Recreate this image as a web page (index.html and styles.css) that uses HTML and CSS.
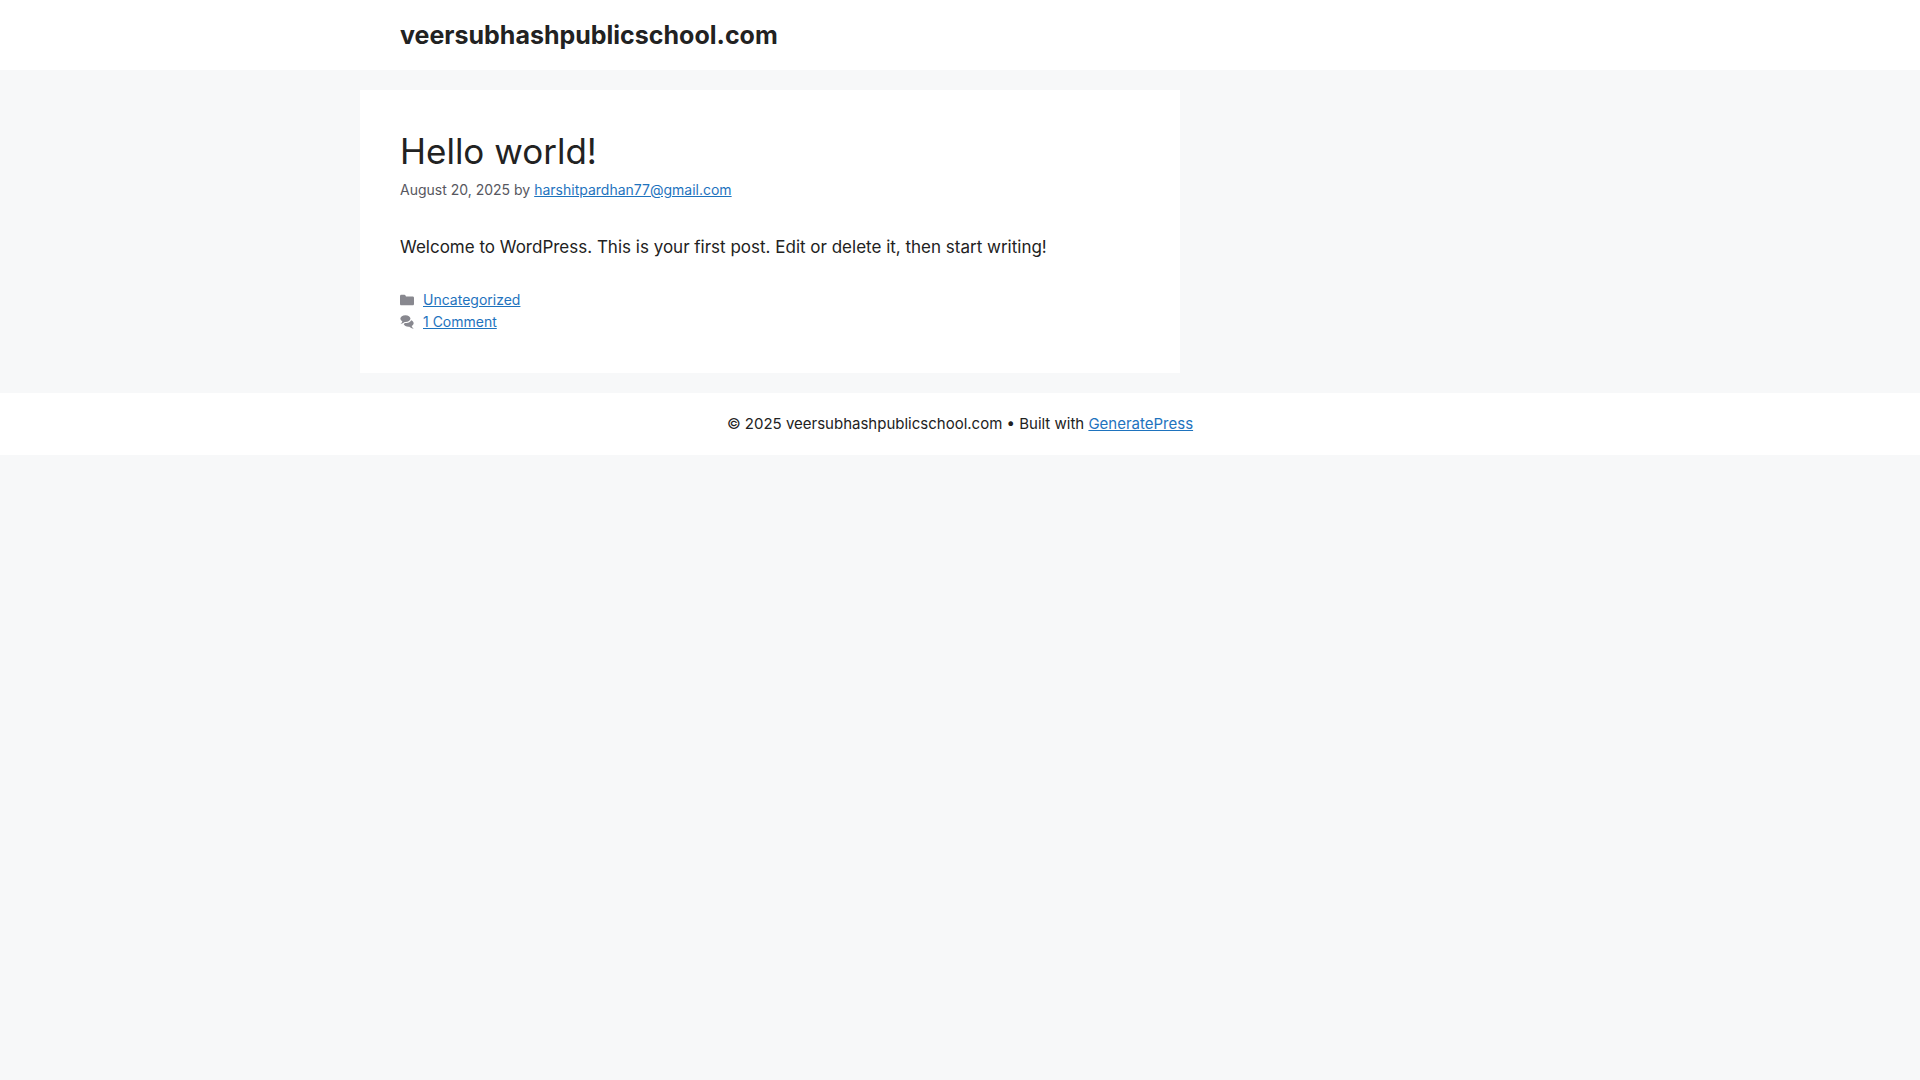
FILE: index.html
```
<!DOCTYPE html>
<html lang="en-US">
<head>
    <meta charset="UTF-8">
    <meta name="viewport" content="width=device-width, initial-scale=1.0">
    <title>veersubhashpublicschool.com</title>
    <link rel="stylesheet" href="styles.css">
</head>
<body>
    <header class="site-header">
        <div class="inside-header">
            <p class="site-title"><a href="#">veersubhashpublicschool.com</a></p>
        </div>
    </header>

    <div class="site-content">
        <main class="content-area">
            <article class="post">
                <h2 class="entry-title"><a href="#">Hello world!</a></h2>
                <div class="entry-meta">
                    <time datetime="2025-08-20">August 20, 2025</time> by <a href="#">harshitpardhan77@gmail.com</a>
                </div>
                <p class="entry-content">Welcome to WordPress. This is your first post. Edit or delete it, then start writing!</p>
                <footer class="post-footer">
                    <div class="cat-links">
                        <svg class="icon" viewBox="0 0 512 512" aria-hidden="true"><path d="M0 112c0-26.510 21.490-48 48-48h110.014a48 48 0 0 1 43.592 27.907l12.349 26.791A16 16 0 0 0 228.486 128H464c26.510 0 48 21.490 48 48v224c0 26.510-21.490 48-48 48H48c-26.510 0-48-21.490-48-48V112z"/></svg>
                        <a href="#">Uncategorized</a>
                    </div>
                    <div class="comments-link">
                        <svg class="icon" viewBox="0 0 512 512" aria-hidden="true"><path d="M132.838 329.973a435.298 435.298 0 0 0 16.769-9.004c13.363-7.574 26.587-16.142 37.419-25.507 7.544.597 15.270.925 23.098.925 54.905 0 105.634-15.311 143.285-41.280 23.728-16.365 43.115-37.692 54.155-62.645 54.739 22.205 91.498 63.272 91.498 110.286 0 42.186-29.558 79.498-75.090 102.828 23.460 49.216 75.090 101.709 75.090 101.709s-115.837-38.350-154.424-78.460c-9.956 1.120-20.297 1.758-30.793 1.758-88.727 0-162.927-43.071-181.007-100.610z"/><path d="M383.371 132.502c0 70.603-82.961 127.787-185.216 127.787-10.496 0-20.837-.639-30.793-1.757-38.587 40.093-154.424 78.429-154.424 78.429s51.630-52.472 75.090-101.670c-45.532-23.321-75.090-60.619-75.090-102.790C12.938 61.900 95.900 4.716 198.155 4.716 300.410 4.715 383.370 61.900 383.370 132.502z"/></svg>
                        <a href="#">1 Comment</a>
                    </div>
                </footer>
            </article>
        </main>
    </div>

    <footer class="site-info">
        &copy; 2025 veersubhashpublicschool.com &bull; Built with <a href="#">GeneratePress</a>
    </footer>
</body>
</html>
```
FILE: styles.css
```
* {
    margin: 0;
    padding: 0;
    box-sizing: border-box;
}

body {
    background-color: #f7f8f9;
    color: #222222;
    font-family: Inter, "Liberation Sans", sans-serif;
    font-size: 17px;
    line-height: 1.5;
}

a {
    color: #1e73be;
    text-decoration: underline;
}

.site-header,
.site-info {
    background-color: #ffffff;
}

.inside-header {
    max-width: 1200px;
    margin: 0 auto;
    padding: 20px 40px;
}

.site-title {
    font-size: 25px;
    font-weight: 700;
    line-height: 30px;
}

.site-title a,
.entry-title a {
    color: #222222;
    text-decoration: none;
}

.site-content {
    max-width: 1200px;
    margin: 0 auto;
}

/* the other 30% is the empty sidebar column */
.content-area {
    width: 70%;
    padding: 20px 20px 20px 0;
}

.post {
    background-color: #ffffff;
    padding: 40px;
}

.entry-title {
    font-size: 35px;
    font-weight: 400;
    line-height: 42px;
}

.entry-meta {
    margin-top: 6px;
    color: #575760;
    font-size: 14px;
    line-height: 24px;
}

.entry-content {
    margin-top: 32px;
    line-height: 26px;
}

.post-footer {
    margin-top: 29px;
    font-size: 14px;
    line-height: 22px;
}

.cat-links,
.comments-link {
    display: flex;
    align-items: center;
    gap: 9px;
}

.icon {
    width: 14px;
    height: 14px;
    fill: #575760;
    opacity: 0.7;
}

.site-info {
    padding: 20px;
    font-size: 15px;
    line-height: 22px;
    text-align: center;
}
```
